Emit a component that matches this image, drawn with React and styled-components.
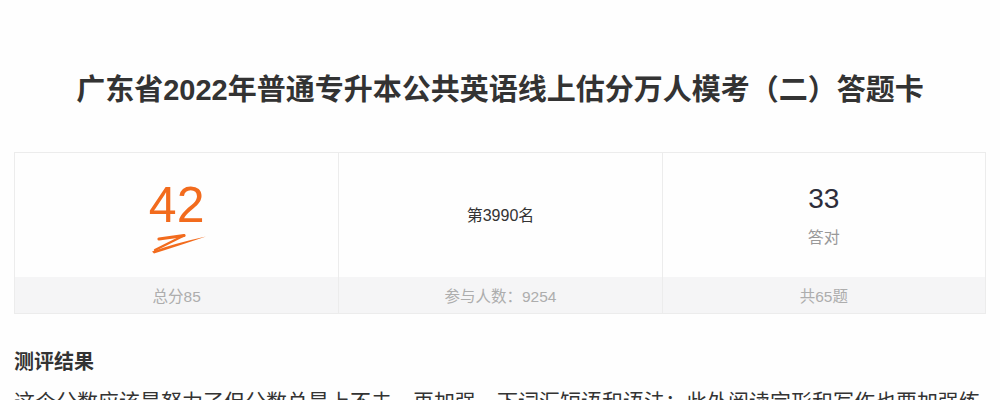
import React from "react";
import styled, { createGlobalStyle } from "styled-components";

const Global = createGlobalStyle`
  html, body { margin: 0; padding: 0; background: #fefefe; }
  body { font-family: "Liberation Sans", "Noto Sans CJK SC", sans-serif; color: #333; }
`;

const Page = styled.div`
  padding: 0 14px;
  height: 400px;
  overflow: hidden;
`;

const Title = styled.h1`
  margin: 69px 0 41px;
  text-align: center;
  font-size: 29px;
  line-height: 42px;
  font-weight: 700;
  color: #333;
`;

const Card = styled.div`
  display: grid;
  grid-template-columns: repeat(3, 1fr);
  border: 1px solid #ececec;
  background: #fefefe;
`;

const Col = styled.div`
  display: flex;
  flex-direction: column;
  border-left: ${(p) => (p.$first ? "none" : "1px solid #ececec")};
`;

const Top = styled.div`
  height: 124px;
  display: flex;
  flex-direction: column;
  align-items: center;
  justify-content: center;
  padding-top: ${(p) => p.$pt || 0}px;
  box-sizing: border-box;
`;

const Footer = styled.div`
  height: 36px;
  background: #f5f5f6;
  display: flex;
  align-items: center;
  justify-content: center;
  font-size: 15.5px;
  color: #adadad;
`;

const Score = styled.div`
  font-size: 50px;
  line-height: 50px;
  color: #f26b1d;
`;

const Swoosh = styled.svg`
  display: block;
  width: 62px;
  height: 22px;
  margin-top: 2px;
`;

const Rank = styled.div`
  font-size: 16px;
  line-height: 22px;
  color: #333;
  margin-top: 2px;
`;

const Big = styled.div`
  font-size: 28px;
  line-height: 34px;
  color: #2d2d3a;
`;

const Small = styled.div`
  font-size: 16px;
  line-height: 22px;
  color: #999;
  margin-top: 11px;
`;

const Heading = styled.h2`
  margin: 34px 0 0;
  font-size: 20px;
  line-height: 28px;
  font-weight: 700;
  color: #333;
`;

const Para = styled.p`
  margin: 10px 0 0;
  font-size: 21px;
  line-height: 32px;
  color: #333;
`;

export default function App() {
  return (
    <Page>
      <Global />
      <Title>广东省2022年普通专升本公共英语线上估分万人模考（二）答题卡</Title>
      <Card>
        <Col $first>
          <Top $pt={4}>
            <Score>42</Score>
            <Swoosh viewBox="0 0 62 22">
              <path d="M13 7 L38 3.5" stroke="#f26b1d" strokeWidth="3.2" strokeLinecap="round" fill="none" />
              <path d="M38 3.5 L9 18" stroke="#f26b1d" strokeWidth="2.4" strokeLinecap="round" fill="none" />
              <path d="M6 19.5 Q30 11 60 4.5 Q32 14 8 21.5 Z" fill="#f26b1d" />
            </Swoosh>
          </Top>
          <Footer>总分85</Footer>
        </Col>
        <Col>
          <Top $pt={-2}>
            <Rank>第3990名</Rank>
          </Top>
          <Footer>参与人数：9254</Footer>
        </Col>
        <Col>
          <Top $pt={-2}>
            <Big>33</Big>
            <Small>答对</Small>
          </Top>
          <Footer>共65题</Footer>
        </Col>
      </Card>
      <Heading>测评结果</Heading>
      <Para>这个分数应该是努力了但分数总是上不去，再加强一下词汇短语和语法；此外阅读完形和写作也要加强练习。</Para>
    </Page>
  );
}
